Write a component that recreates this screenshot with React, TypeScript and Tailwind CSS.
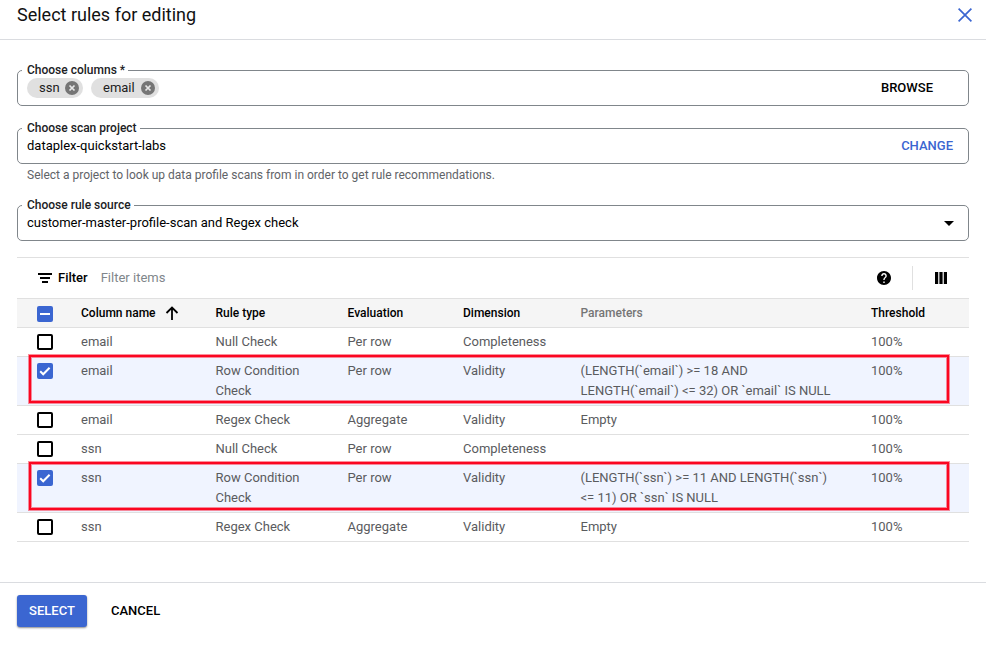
import type { ReactNode } from "react";

type Rule = {
  column: string;
  type: string;
  evaluation: string;
  dimension: string;
  parameters: string[];
  checked?: boolean;
};

const rules: Rule[] = [
  { column: "email", type: "Null Check", evaluation: "Per row", dimension: "Completeness", parameters: [] },
  {
    column: "email",
    type: "Row Condition Check",
    evaluation: "Per row",
    dimension: "Validity",
    parameters: ["(LENGTH(`email`) >= 18 AND", "LENGTH(`email`) <= 32) OR `email` IS NULL"],
    checked: true,
  },
  { column: "email", type: "Regex Check", evaluation: "Aggregate", dimension: "Validity", parameters: ["Empty"] },
  { column: "ssn", type: "Null Check", evaluation: "Per row", dimension: "Completeness", parameters: [] },
  {
    column: "ssn",
    type: "Row Condition Check",
    evaluation: "Per row",
    dimension: "Validity",
    parameters: ["(LENGTH(`ssn`) >= 11 AND LENGTH(`ssn`)", "<= 11) OR `ssn` IS NULL"],
    checked: true,
  },
  { column: "ssn", type: "Regex Check", evaluation: "Aggregate", dimension: "Validity", parameters: ["Empty"] },
];

const columns = "grid grid-cols-[64px_134.5px_132px_115.5px_117.5px_290.5px_98px]";

const highlight =
  "absolute left-[12px] h-12 w-[920px] border-2 border-[#fb0621] shadow-[0_0_0_1px_rgba(251,6,33,0.45),inset_0_0_0_1px_rgba(251,6,33,0.45)]";

function Field({ label, children }: { label: string; children: ReactNode }) {
  return (
    <fieldset className="h-[43px] w-full min-w-0 rounded-[5px] border border-[#80868b] pr-[14px] pl-[9px]">
      <legend className="-ml-[5px] h-[15px] pr-[3px] pl-[5px] text-[12px] leading-[15px] font-medium text-[#202124]">
        {label}
      </legend>
      {children}
    </fieldset>
  );
}

function Chip({ label, width }: { label: string; width: string }) {
  return (
    <span
      className={`flex h-5 items-center justify-between rounded-full bg-[#e0e0e0] pr-[3px] pl-[12px] text-[13px] text-[#212121] ${width}`}
    >
      {label}
      <svg width="16" height="16" viewBox="0 0 16 16">
        <circle cx="8" cy="8" r="7" fill="#757575" />
        <path d="M5.5 5.5l5 5M10.5 5.5l-5 5" stroke="#e6e6e6" strokeWidth="1.7" />
      </svg>
    </span>
  );
}

function Checkbox({ state }: { state: "off" | "on" | "mixed" }) {
  if (state === "off") return <span className="block size-4 rounded-[2px] border-2 border-black" />;
  return (
    <span className="block size-4 rounded-[2px] bg-[#3b66d1]">
      <svg width="16" height="16" viewBox="0 0 16 16" fill="none" stroke="white" strokeWidth="2">
        {state === "on" ? <path d="M3.2 8.3l3 3 6.4-6.6" /> : <path d="M3 8h10" />}
      </svg>
    </span>
  );
}

export default function App() {
  return (
    <div className="flex h-[652px] w-[986px] flex-col overflow-hidden bg-white font-['Roboto',sans-serif] text-[13px] text-black">
      <header className="flex h-10 shrink-0 items-start justify-between border-b border-[#dadce0] pr-[14px] pl-[17px]">
        <h1 className="pt-[3px] text-[18px] leading-6 text-[#111111]">Select rules for editing</h1>
        <svg className="mt-[8px]" width="14" height="14" viewBox="0 0 14 14" stroke="#3b66d1" strokeWidth="1.7">
          <path d="M.6.6l12.8 12.8M13.4.6L.6 13.4" />
        </svg>
      </header>

      <main className="flex h-[542px] shrink-0 flex-col px-[17px] pt-[23px]">
        <Field label="Choose columns *">
          <div className="flex h-5 items-center">
            <div className="flex flex-1 gap-2">
              <Chip label="ssn" width="w-[56px]" />
              <Chip label="email" width="w-[68px]" />
            </div>
            <button className="mr-[21px] font-medium">BROWSE</button>
          </div>
        </Field>
        <div className="mt-[15px]">
          <Field label="Choose scan project">
            <div className="flex h-5 items-center justify-between">
              <span>dataplex-quickstart-labs</span>
              <button className="mr-px font-medium text-[#3b66d1]">CHANGE</button>
            </div>
          </Field>
        </div>
        <p className="mt-[3px] h-4 pl-[10px] text-[12px] leading-4 text-[#5f6368]">
          Select a project to look up data profile scans from in order to get rule recommendations.
        </p>
        <div className="mt-[15px]">
          <Field label="Choose rule source">
            <div className="flex h-5 items-center justify-between">
              <span>customer-master-profile-scan and Regex check</span>
              <svg width="10" height="5" viewBox="0 0 10 5">
                <path d="M0 0h10L5 5z" />
              </svg>
            </div>
          </Field>
        </div>

        <section className="relative mt-4 border-t border-[#e0e0e0]">
          <div className="flex h-10 items-center pl-[21px]">
            <svg width="14" height="10" viewBox="0 0 14 10">
              <path d="M0 0h14v2H0zM2 4h10v2H2zM4 8h6v2h-6z" />
            </svg>
            <span className="ml-[6px] font-medium">Filter</span>
            <span className="ml-[13px] flex-1 text-[#80868b]">Filter items</span>
            <svg width="14" height="14" viewBox="2 2 20 20">
              <path d="M12 2C6.480 2 2 6.480 2 12s4.480 10 10 10 10-4.480 10-10S17.520 2 12 2zm1 17h-2v-2h2v2zm2.070-7.750l-.9.920C13.450 12.900 13 13.500 13 15h-2v-.5c0-1.100.45-2.100 1.170-2.830l1.240-1.260c.37-.36.59-.86.59-1.410 0-1.100-.9-2-2-2s-2 .9-2 2H8c0-2.210 1.790-4 4-4s4 1.790 4 4c0 .88-.36 1.680-.93 2.250z" />
            </svg>
            <span className="ml-[21px] h-6 w-px bg-[#e0e0e0]" />
            <svg className="mr-[22px] ml-[22px]" width="12" height="12" viewBox="0 0 12 12">
              <path d="M0 0h3.200v12H0zM4.400 0h3.200v12H4.400zM8.800 0H12v12H8.800z" />
            </svg>
          </div>

          <div className={`${columns} h-[30px] items-center border-y border-[#e0e0e0] bg-[#f5f5f5] text-[12px] font-medium`}>
            <span className="pt-[2px] pl-5">
              <Checkbox state="mixed" />
            </span>
            <span className="flex items-center gap-[9px]">
              Column name
              <svg width="14" height="14" viewBox="0 0 14 14" fill="none" stroke="black" strokeWidth="1.800">
                <path d="M7 14V1.500M1.500 7L7 1.500 12.500 7" />
              </svg>
            </span>
            <span>Rule type</span>
            <span>Evaluation</span>
            <span>Dimension</span>
            <span className="text-[#757575]">Parameters</span>
            <span>Threshold</span>
          </div>

          {rules.map((rule, i) => (
            <div
              key={i}
              className={`${columns} border-b border-[#e0e0e0] pt-1 pb-1 leading-5 text-[#5a5b5e] ${rule.checked ? "h-[49px] bg-[#f0f4ff]" : "h-[29px]"}`}
            >
              <span className="pt-[2px] pl-5">
                <Checkbox state={rule.checked ? "on" : "off"} />
              </span>
              <span>{rule.column}</span>
              <span className="pr-10">{rule.type}</span>
              <span>{rule.evaluation}</span>
              <span>{rule.dimension}</span>
              <span className="whitespace-nowrap">
                {rule.parameters.map((line) => (
                  <span key={line} className="block">{line}</span>
                ))}
              </span>
              <span>100%</span>
            </div>
          ))}

          <div className={`${highlight} top-[97px]`} />
          <div className={`${highlight} top-[204px]`} />
        </section>
      </main>

      <footer className="flex flex-1 items-start border-t border-[#dadce0] pt-3 pl-[17px] font-medium">
        <button className="h-8 w-[70px] rounded-[3px] bg-[#3b66d1] text-white shadow-[0_1px_2px_rgba(0,0,0,0.45)]">SELECT</button>
        <button className="ml-6 h-8">CANCEL</button>
      </footer>
    </div>
  );
}
